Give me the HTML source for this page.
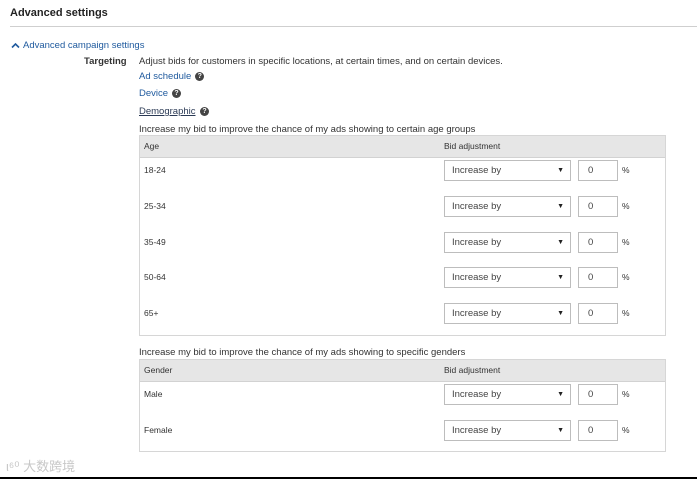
<!DOCTYPE html>
<html><head><style>
body{margin:0;width:697px;height:479px;background:#fff;position:relative;overflow:hidden;font-family:"Liberation Sans",Arial,sans-serif;font-size:9.5px;color:#333}
.a{position:absolute;white-space:nowrap}
.link{color:#1f5a9e}
.q{display:inline-block;width:9px;height:9px;border-radius:50%;background:#444;color:#fff;font-size:7px;font-weight:bold;text-align:center;line-height:9px;vertical-align:middle;margin-left:4px}
.tbl{position:absolute;left:139px;width:527px;border:1px solid #d6d6d6;box-sizing:border-box}
.hd{position:absolute;left:0;right:0;top:0;height:21px;background:#e6e6e6;border-bottom:1px solid #d2d2d2}
.sel{position:absolute;width:127px;height:21px;border:1px solid #bdbdbd;box-sizing:border-box;font-size:9.5px;line-height:19px;padding-left:7px;color:#444}
.sel:after{content:"▼";position:absolute;right:6px;top:0;font-size:7px;color:#222}
.inp{position:absolute;width:40px;height:21px;border:1px solid #bdbdbd;box-sizing:border-box;line-height:19px;padding-left:9px;color:#444}
.s{font-size:8.5px}
</style></head><body>
<div class="a" style="left:10px;top:7px;font-weight:bold;font-size:11px;color:#222">Advanced settings</div>
<div class="a" style="left:10px;top:26px;width:687px;height:1px;background:#cfcfcf"></div>
<svg class="a" style="left:11px;top:42px" width="9" height="7"><path d="M1 5.5 L4.5 2 L8 5.5" stroke="#1f5a9e" stroke-width="1.6" fill="none"/></svg>
<div class="a link" style="left:23px;top:40px">Advanced campaign settings</div>
<div class="a" style="left:84px;top:56px;font-weight:bold">Targeting</div>
<div class="a" style="left:139px;top:56px">Adjust bids for customers in specific locations, at certain times, and on certain devices.</div>
<div class="a link" style="left:139px;top:71px">Ad schedule<span class="q">?</span></div>
<div class="a link" style="left:139px;top:88px">Device<span class="q">?</span></div>
<div class="a" style="left:139px;top:106px;color:#2b3a55;text-decoration:underline">Demographic</div><div class="a" style="left:196px;top:106px"><span class="q">?</span></div>
<div class="a" style="left:139px;top:124px">Increase my bid to improve the chance of my ads showing to certain age groups</div>
<div class="tbl" style="top:135px;height:201px"><div class="hd"></div></div>
<div class="a s" style="left:144px;top:141px">Age</div>
<div class="a s" style="left:444px;top:141px">Bid adjustment</div>
<div class="tbl" style="top:359px;height:93px"><div class="hd"></div></div>
<div class="a" style="left:139px;top:347px">Increase my bid to improve the chance of my ads showing to specific genders</div>
<div class="a s" style="left:144px;top:365px">Gender</div>
<div class="a s" style="left:444px;top:365px">Bid adjustment</div>
<div class="a s" style="left:144px;top:165px">18-24</div>
<div class="a s" style="left:144px;top:201px">25-34</div>
<div class="a s" style="left:144px;top:237px">35-49</div>
<div class="a s" style="left:144px;top:272px">50-64</div>
<div class="a s" style="left:144px;top:308px">65+</div>
<div class="a s" style="left:144px;top:389px">Male</div>
<div class="a s" style="left:144px;top:425px">Female</div>
<div class="sel" style="left:444px;top:160px">Increase by</div><div class="inp" style="left:578px;top:160px">0</div><div class="a s" style="left:622px;top:165px">%</div>
<div class="sel" style="left:444px;top:196px">Increase by</div><div class="inp" style="left:578px;top:196px">0</div><div class="a s" style="left:622px;top:201px">%</div>
<div class="sel" style="left:444px;top:232px">Increase by</div><div class="inp" style="left:578px;top:232px">0</div><div class="a s" style="left:622px;top:237px">%</div>
<div class="sel" style="left:444px;top:267px">Increase by</div><div class="inp" style="left:578px;top:267px">0</div><div class="a s" style="left:622px;top:272px">%</div>
<div class="sel" style="left:444px;top:303px">Increase by</div><div class="inp" style="left:578px;top:303px">0</div><div class="a s" style="left:622px;top:308px">%</div>
<div class="sel" style="left:444px;top:384px">Increase by</div><div class="inp" style="left:578px;top:384px">0</div><div class="a s" style="left:622px;top:389px">%</div>
<div class="sel" style="left:444px;top:420px">Increase by</div><div class="inp" style="left:578px;top:420px">0</div><div class="a s" style="left:622px;top:425px">%</div>
<div class="a" style="left:6px;top:456px;font-size:13px;color:#c8c8c8;font-family:'Liberation Sans','Noto Sans CJK SC',sans-serif">ι⁶⁰ 大数跨境</div>
<div class="a" style="left:0;top:477px;width:697px;height:2px;background:#000"></div>
</body></html>
